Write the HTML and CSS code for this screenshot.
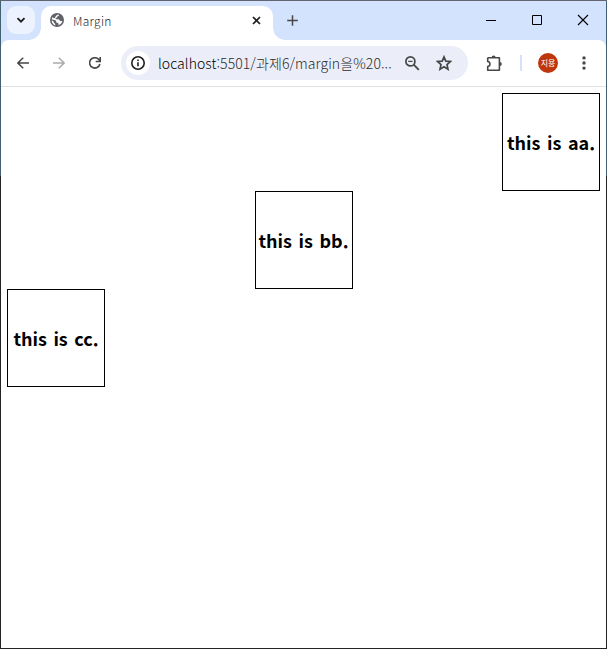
FILE: index.html
```html
<!DOCTYPE html>
<html lang="ko">
<head>
<meta charset="utf-8">
<title>Margin</title>
<link rel="stylesheet" href="styles.css">
</head>
<body>
<div class="window">
  <header class="tabstrip">
    <button class="tab-search" aria-label="Search tabs">
      <svg width="28" height="28" viewBox="0 0 28 28"><path d="M10.5 12.2 14 15.7l3.500-3.500" fill="none" stroke="#1f1f1f" stroke-width="1.900"/></svg>
    </button>
    <div class="tab">
      <svg class="globe" width="14" height="14" viewBox="0 0 14 14"><circle cx="7" cy="7" r="7" fill="#5f6368"/><path d="M8.800 1.600c.3 1-.3 1.700-1.300 1.800-.7.1-.4 1.300-1.400 1.500-.8.200-.7 1.400.2 1.400h2c1 0 1.100 1.600 2.200 1.600h1.800c-.4 2-1.800 3.700-3.800 4.200 0-1.600-.1-2.400-1.200-2.400-.9 0-1.200-.7-1.200-1.500C6.100 7.200 4 6.900 1.700 6.300 2 5.300 2.300 4.500 2.800 3.900l.8 1.300 1.500-.4.6-1.600L7 1.900z" fill="#fff"/><path d="M1.700 7.500c1.300.1 2 .9 2.100 1.900.1.900 1.200.7 1.400 1.500l.1 1.500C3.200 11.700 1.700 9.800 1.700 7.500z" fill="#fff"/></svg>
      <span class="tab-title">Margin</span>
      <svg class="close" width="9" height="9" viewBox="0 0 9 9"><path d="M1 1l7 7M8 1 1 8" stroke="#1f1f1f" stroke-width="1.700"/></svg>
    </div>
    <svg class="new-tab" width="11" height="11" viewBox="0 0 11 11"><path d="M5.500.2v10.600M.2 5.500h10.600" stroke="#474747" stroke-width="1.500"/></svg>
    <div class="controls">
      <svg width="46" height="38" viewBox="0 0 46 38"><path d="M18 19.500h10" stroke="#000"/></svg>
      <svg width="46" height="38" viewBox="0 0 46 38"><path d="M18.500 14.500h9v9h-9z" fill="none" stroke="#000"/></svg>
      <svg width="46" height="38" viewBox="0 0 46 38"><path d="M18 14l10 10M28 14 18 24" stroke="#000" stroke-width="1.100"/></svg>
    </div>
  </header>
  <nav class="toolbar">
    <div class="nav-icons">
      <svg width="12" height="12" viewBox="0 0 12 12"><path d="M12 6H1M6.200.7.900 6l5.300 5.300" fill="none" stroke="#474747" stroke-width="1.500"/></svg>
      <svg width="12" height="12" viewBox="0 0 12 12"><path d="M0 6h11M5.800.7 11.100 6l-5.300 5.300" fill="none" stroke="#aaa" stroke-width="1.500"/></svg>
      <svg width="12" height="12" viewBox="0 0 12 12"><path d="M10.900 7A5.200 5.200 0 1 1 9.700 2.400l1.300 1.400" fill="none" stroke="#474747" stroke-width="1.600"/><path d="M11.200 0v4.500H6.700" fill="none" stroke="#474747" stroke-width="1.600"/></svg>
    </div>
    <div class="address">
      <div class="site-info">
        <svg width="14" height="14" viewBox="0 0 14 14"><circle cx="7" cy="7" r="6.200" fill="none" stroke="#1f1f1f" stroke-width="1.600"/><path d="M7 6.300v4M7 3.500v1.600" stroke="#1f1f1f" stroke-width="1.600"/></svg>
      </div>
      <span class="url"><b>localhost</b>:5501/과제6/margin을%20...</span>
      <svg class="zoom-out" width="15" height="15" viewBox="0 0 15 15"><circle cx="5.400" cy="5.400" r="4.500" fill="none" stroke="#474747" stroke-width="1.700"/><path d="M8.700 8.700 13.800 13.800" stroke="#474747" stroke-width="1.900"/><path d="M3.200 5.400h4.400" stroke="#474747" stroke-width="1.200"/></svg>
      <svg class="star" width="16" height="16" viewBox="0 0 16 16"><path d="M8 1.900l1.800 4.200 4.700.4-3.500 3.100 1 4.600L8 11.800l-4 2.400 1-4.600-3.500-3.100 4.700-.4z" fill="none" stroke="#474747" stroke-width="1.700"/></svg>
    </div>
    <svg class="extension" width="17" height="17" viewBox="0 0 17 17"><path d="M2.200 2.800H13.400V15.200H1.700V11.500C4.700 11.200 4.700 6.800 1.700 6.500V3.300z" fill="none" stroke="#474747" stroke-width="1.600" stroke-linejoin="round"/><path d="M5.600 2.500a2 2 0 0 1 4 0zM13.800 7a2 2 0 0 1 0 4z" fill="#474747"/></svg>
    <span class="divider"></span>
    <span class="avatar">지용</span>
    <svg class="more" width="4" height="14" viewBox="0 0 4 14"><g fill="#474747"><circle cx="2" cy="1.900" r="1.700"/><circle cx="2" cy="7" r="1.700"/><circle cx="2" cy="12.100" r="1.700"/></g></svg>
  </nav>
  <main class="page">
    <div class="box right"><h3>this is aa.</h3></div>
    <div class="box center"><h3>this is bb.</h3></div>
    <div class="box"><h3>this is cc.</h3></div>
  </main>
</div>
</body>
</html>
```
FILE: styles.css
```css
* { box-sizing: border-box; }
body {
  margin: 0;
  height: 649px;
  padding: 1px;
  overflow: hidden;
  background: linear-gradient(#62656f 0 1px, #416071 1px 176px, #242226 176px);
  font-family: "Noto Sans CJK KR", sans-serif;
}
svg { display: block; flex: none; }
.window {
  height: 647px;
  display: flex;
  flex-direction: column;
  background: #d3e3fd;
}
.tabstrip {
  display: flex;
  height: 39px;
  flex: none;
  padding: 5px 0 0 6px;
}
.tab-search {
  width: 28px;
  height: 28px;
  padding: 0;
  border: 0;
  border-radius: 9px;
  background: #ecf3fe;
}
.tab {
  position: relative;
  display: flex;
  align-items: center;
  width: 232px;
  height: 34px;
  margin-left: 6px;
  padding: 0 12px 6px 9px;
  border-radius: 10px 10px 0 0;
  background: #fff;
}
.tab::before, .tab::after {
  content: "";
  position: absolute;
  bottom: 0;
  width: 12px;
  height: 12px;
}
.tab::before {
  left: -12px;
  background: radial-gradient(circle at 0 0, transparent 11.500px, #fff 12px);
}
.tab::after {
  right: -12px;
  background: radial-gradient(circle at 100% 0, transparent 11.500px, #fff 12px);
}
.tab-title {
  flex: 1;
  margin: 2px 0 0 9px;
  font-size: 12px;
  font-weight: 300;
  line-height: 18px;
  letter-spacing: .3px;
  color: #1f1f1f;
}
.new-tab { margin: 9px 0 0 14px; }
.controls { display: flex; margin: -5px 0 0 auto; }
.toolbar {
  display: flex;
  align-items: center;
  height: 47px;
  flex: none;
  border-bottom: 1px solid #dfe1e2;
  border-radius: 8px 8px 0 0;
  background: #fff;
}
.nav-icons { display: flex; gap: 24px; margin-left: 16px; }
.address {
  display: flex;
  align-items: center;
  width: 347px;
  height: 34px;
  margin-left: 20px;
  padding-left: 5px;
  border-radius: 17px;
  background: #ebeef8;
}
.site-info {
  display: grid;
  place-items: center;
  width: 24px;
  height: 24px;
  border-radius: 50%;
  background: #fff;
}
.url {
  width: 240px;
  margin-left: 8px;
  font-size: 14px;
  font-weight: 300;
  line-height: 20px;
  letter-spacing: .08px;
  white-space: nowrap;
  color: #2b2b2b;
}
.url b { font-weight: 300; color: #000; }
.zoom-out { margin-left: 7px; }
.star { margin-left: 16px; }
.extension { margin-left: 18px; }
.divider { width: 2px; height: 16px; margin-left: 17px; background: #d3e3fd; }
.avatar {
  width: 20px;
  height: 20px;
  margin-left: 16px;
  border-radius: 50%;
  background: #bf360c;
  color: #fff;
  font-size: 8px;
  line-height: 20px;
  text-align: center;
}
.more { margin-left: 24px; }
.page { flex: 1; padding: 6px; background: #fff; }
.box {
  display: flex;
  align-items: center;
  justify-content: center;
  width: 98px;
  height: 98px;
  border: 1px solid #000;
}
.right { margin-left: auto; }
.center { margin-left: auto; margin-right: auto; }
h3 {
  margin: 0;
  font-size: 18px;
  font-weight: 700;
  line-height: 26px;
  word-spacing: 1.500px;
  white-space: nowrap;
}
```
